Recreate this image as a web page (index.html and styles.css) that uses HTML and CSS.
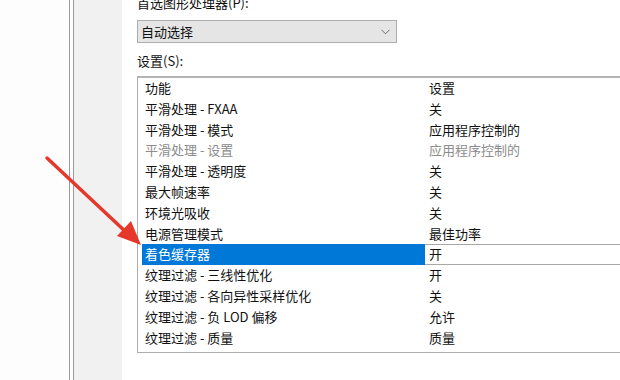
FILE: index.html
```html
<!DOCTYPE html>
<html lang="zh-CN">
<head>
  <meta charset="UTF-8">
  <title>管理 3D 设置</title>
  <link rel="stylesheet" href="styles.css">
</head>
<body>

  <div class="page">
    <div class="gutter"></div>
    <div class="rule"></div>
    <div class="rule second"></div>
    <div class="side"></div>

    <div class="content">
      <div class="label top">首选图形处理器(P):</div>
      <div class="select">
        <span>自动选择</span>
        <svg class="chevron" width="9" height="6" viewBox="0 0 9 6">
          <path d="M0.5 0.8 L4.5 4.8 L8.5 0.8" fill="none" stroke="#6d6d6d" stroke-width="1"/>
        </svg>
      </div>

      <div class="label">设置(S):</div>
      <div class="list">
        <div class="row head"><span class="name">功能</span><span class="value">设置</span></div>
        <div class="row"><span class="name">平滑处理 - FXAA</span><span class="value">关</span></div>
        <div class="row"><span class="name">平滑处理 - 模式</span><span class="value">应用程序控制的</span></div>
        <div class="row disabled"><span class="name">平滑处理 - 设置</span><span class="value">应用程序控制的</span></div>
        <div class="row"><span class="name">平滑处理 - 透明度</span><span class="value">关</span></div>
        <div class="row"><span class="name">最大帧速率</span><span class="value">关</span></div>
        <div class="row"><span class="name">环境光吸收</span><span class="value">关</span></div>
        <div class="row"><span class="name">电源管理模式</span><span class="value">最佳功率</span></div>
        <div class="row selected"><span class="name">着色缓存器</span><span class="value">开</span></div>
        <div class="row"><span class="name">纹理过滤 - 三线性优化</span><span class="value">开</span></div>
        <div class="row"><span class="name">纹理过滤 - 各向异性采样优化</span><span class="value">关</span></div>
        <div class="row"><span class="name">纹理过滤 - 负 LOD 偏移</span><span class="value">允许</span></div>
        <div class="row"><span class="name">纹理过滤 - 质量</span><span class="value">质量</span></div>
      </div>
    </div>
  </div>

  <!-- red annotation arrow -->
  <svg class="arrow" width="620" height="380" viewBox="0 0 620 380">
    <path d="M47 158 L127 233" stroke="#e5382b" stroke-width="3.5" stroke-linecap="round"/>
    <polygon points="141,245 117,236 131,221" fill="#e5382b"/>
  </svg>

</body>
</html>
```

FILE: styles.css
```css
body {
  margin: 0;
  width: 620px;
  height: 380px;
  overflow: hidden;
  background: #fdfdfd;
  font-family: "Noto Sans CJK SC", "Noto Sans", sans-serif;
  font-size: 13px;
  color: #111;
}

.page {
  display: flex;
  height: 380px;
}

.gutter,
.rule,
.side {
  flex-shrink: 0;
}

.gutter {
  width: 69px;
}

.rule {
  width: 1px;
  background: #9a9a9a;
}

.rule.second {
  margin-left: 3px;
}

.side {
  width: 48px;
  background: #f1f1f1;
}

.content {
  flex: 1;
  min-width: 0;
  background: #fff;
  padding-left: 15px;
  margin-top: -6px;
}

.label {
  line-height: 18px;
  height: 18px;
  margin-top: 9px;
}

.label.top {
  margin-top: 0;
}

.select {
  margin-top: 8px;
  width: 249px;
  height: 21px;
  border: 1px solid #adadad;
  background: #e5e5e5;
  display: flex;
  align-items: center;
  justify-content: space-between;
  padding: 0 6px 0 3px;
}

.chevron {
  margin-top: 1px;
}

/* list runs on past the right edge of the window, so no right border */
.list {
  margin-top: 6px;
  height: 274px;
  border: 1px solid #adadad;
  border-top: 2px solid #b4b4b4;
  border-right: none;
  padding: 0 0 0 4px;
  background: #fff;
}

.row {
  display: flex;
  height: 20.8px;
  line-height: 20.8px;
  white-space: nowrap;
}

.row .name {
  flex-shrink: 0;
  width: 280px;
  padding-left: 3px;
}

.row .value {
  flex: 1;
  padding-left: 4px;
}

.row.disabled {
  color: #8c8c8c;
}

.row.selected .name {
  background: #0078d7;
  color: #fff;
}

.row.selected .value {
  border-top: 1px solid #a8a8a8;
  border-bottom: 1px solid #a8a8a8;
  line-height: 18.8px;
}

.arrow {
  position: absolute;
  left: 0;
  top: 0;
  pointer-events: none;
}
```
